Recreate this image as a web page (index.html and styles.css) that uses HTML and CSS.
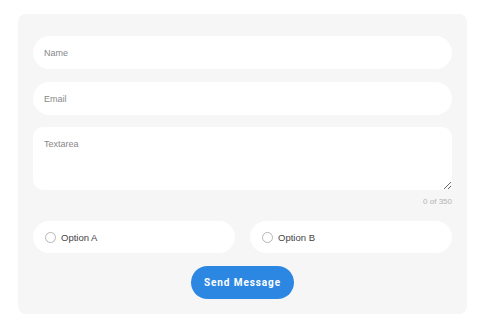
FILE: index.html
```html
<!DOCTYPE html>
<html>
<head>
  <meta charset="UTF-8">
  <link rel="stylesheet" href="styles.css">
</head>
<body>
  <form class="contact-card">
    <input class="field" type="text" placeholder="Name">
    <input class="field field--email" type="email" placeholder="Email">
    <textarea class="field field--area" placeholder="Textarea"></textarea>
    <div class="counter">0 of 350</div>

    <div class="options">
      <label class="option">
        <span class="option__radio"></span>
        <span>Option A</span>
      </label>
      <label class="option">
        <span class="option__radio"></span>
        <span>Option B</span>
      </label>
    </div>

    <div class="actions">
      <button type="button" class="send-btn">Send Message</button>
    </div>
  </form>
</body>
</html>
```

FILE: styles.css
```css
html,
body {
  margin: 0;
  background: #fff;
  font-family: "Liberation Sans", Arial, sans-serif;
}

.contact-card {
  box-sizing: border-box;
  width: 449px;
  height: 300px;
  margin: 14px 0 0 18px;
  padding: 22px 15px 15px;
  background: #f6f6f6;
  border-radius: 8px;
  display: flex;
  flex-direction: column;
}

.field {
  box-sizing: border-box;
  display: block;
  width: 100%;
  height: 33px;
  margin: 0 0 13px;
  padding: 0 11px;
  border: none;
  border-radius: 17px;
  background: #fff;
  font-family: inherit;
  font-size: 9px;
  color: #333;
  outline: none;
}

.field::placeholder {
  color: #888;
}

.field--email {
  margin-bottom: 12px;
}

.field--area {
  height: 63px;
  margin: 0;
  padding: 12px 11px;
  border-radius: 10px;
  resize: vertical;
}

.counter {
  margin-top: 6px;
  text-align: right;
  font-size: 8px;
  line-height: 12px;
  color: #b3b3b3;
}

.options {
  display: flex;
  gap: 15px;
  margin-top: 13px;
}

.option {
  flex: 1;
  display: flex;
  align-items: center;
  gap: 5px;
  height: 32px;
  padding: 0 12px;
  background: #fff;
  border-radius: 16px;
  font-size: 9.5px;
  color: #444;
}

.option__radio {
  box-sizing: border-box;
  width: 11px;
  height: 11px;
  border: 1px solid #b5b5b5;
  border-radius: 50%;
  background: #fff;
}

.actions {
  display: flex;
  justify-content: center;
  margin-top: 13px;
}

.send-btn {
  width: 103px;
  height: 33px;
  padding: 0;
  border: none;
  border-radius: 17px;
  background: #2c87e3;
  color: #fff;
  font-family: Roboto, "Liberation Sans", sans-serif;
  font-size: 10px;
  font-weight: 700;
  letter-spacing: 0.9px;
  cursor: pointer;
}
```
